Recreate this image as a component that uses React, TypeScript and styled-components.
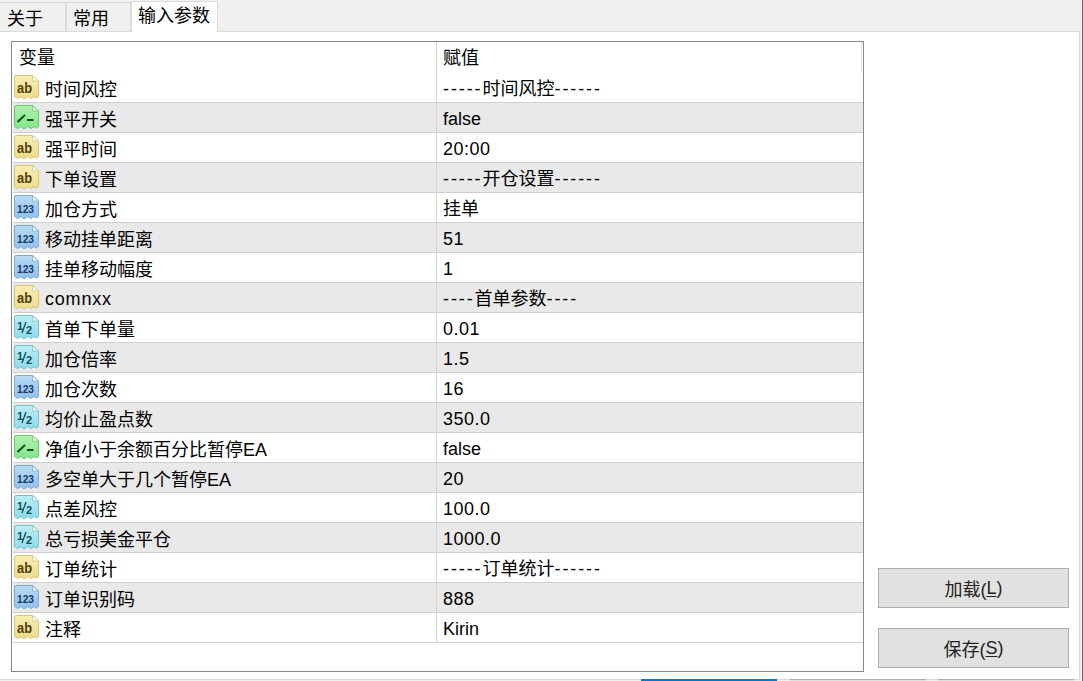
import React from 'react';
import styled, { createGlobalStyle } from 'styled-components';

const GlobalStyle = createGlobalStyle`
  html, body {
    margin: 0;
    padding: 0;
    background: #fff;
  }
  body {
    font-family: "Liberation Sans", "Noto Sans CJK SC", sans-serif;
    font-size: 18px;
    color: #000;
  }
`;

const Window = styled.div`
  width: 1083px;
  height: 681px;
  overflow: hidden;
  display: flex;
  flex-direction: column;
  background: #f0f0f0;
  border-right: 1px solid #666;
  box-sizing: border-box;
`;

const TabBar = styled.div`
  height: 31px;
  flex: none;
  display: flex;
  align-items: flex-end;
`;

const Tab = styled.div<{ $active?: boolean; $first?: boolean; $width: number }>`
  box-sizing: border-box;
  height: ${(p) => (p.$active ? 31 : 29)}px;
  width: ${(p) => p.$width}px;
  margin-bottom: ${(p) => (p.$active ? -1 : 0)}px;
  padding-left: ${(p) => (p.$first ? 7 : 6)}px;
  line-height: ${(p) => (p.$active ? 29 : 32)}px;
  background: ${(p) => (p.$active ? '#fff' : '#f0f0f0')};
  border-top: 1px solid #d9d9d9;
  border-right: 1px solid #d9d9d9;
  border-left: ${(p) => (p.$first ? 'none' : '1px solid #d9d9d9')};
  position: relative;
  z-index: ${(p) => (p.$active ? 1 : 0)};
`;

const Panel = styled.div`
  flex: none;
  height: 648px;
  margin-right: 2px;
  box-sizing: border-box;
  background: #fff;
  border-top: 1px solid #d9d9d9;
  border-right: 1px solid #d9d9d9;
  display: flex;
  padding: 9px 10px 0 11px;
`;

const Grid = styled.div`
  width: 853px;
  height: 631px;
  box-sizing: border-box;
  border: 1px solid #828790;
  flex: none;
  padding-left: 1px;
`;

const HeaderRow = styled.div`
  height: 31px;
  display: flex;
  margin-right: 1px;
  border-right: 1px solid #e3e3e3;
`;

const Row = styled.div<{ $odd?: boolean }>`
  height: 30px;
  box-sizing: border-box;
  display: flex;
  background: ${(p) => (p.$odd ? '#e9e9e9' : '#fff')};
  border-bottom: 1px solid #cfcfcf;
`;

const NameCell = styled.div`
  width: 423px;
  flex: none;
  box-sizing: border-box;
  display: flex;
  align-items: center;
  gap: 6px;
  padding-left: 1px;
  white-space: nowrap;
`;

// a name with no CJK glyph sits higher in its line box, hence the padding
const NameText = styled.span<{ $latin?: boolean }>`
  padding-top: ${(p) => (p.$latin ? 3 : 0)}px;
  letter-spacing: ${(p) => (p.$latin ? 0.8 : 0)}px;
`;

const HeaderName = styled.div`
  width: 423px;
  flex: none;
  box-sizing: border-box;
  padding-left: 6px;
  line-height: 33px;
`;

const ValueCell = styled.div<{ $numeric?: boolean }>`
  flex: 1;
  padding-left: 6px;
  border-left: 1px solid #d4d4d4;
  line-height: 32px;
  white-space: nowrap;
  letter-spacing: ${(p) => (p.$numeric ? 0.5 : 0)}px;
`;

const HeaderValue = styled(ValueCell)`
  line-height: 33px;
`;

const Dashes = styled.span`
  letter-spacing: 1.9px;
`;

const Side = styled.div`
  flex: 1;
  display: flex;
  flex-direction: column;
  align-items: flex-end;
  padding-top: 527px;
  gap: 20px;
`;

const Button = styled.div`
  box-sizing: border-box;
  width: 191px;
  height: 40px;
  background: #e1e1e1;
  border: 1px solid #adadad;
  display: flex;
  align-items: center;
  justify-content: center;
  color: #222;

  u {
    text-underline-offset: 2px;
  }
`;

const BottomStrip = styled.div`
  flex: 1;
  display: flex;
  background: #f0f0f0;
  border-top: 1px solid #d9d9d9;
  margin-right: 2px;
`;

const StatusTab = styled.div<{ $blue?: boolean; $left: number }>`
  width: 136px;
  margin-left: ${(p) => p.$left}px;
  background: ${(p) => (p.$blue ? '#0078d7' : '#e1e1e1')};
  border-top: 1px solid ${(p) => (p.$blue ? '#0078d7' : '#adadad')};
  margin-top: -1px;
`;

const IconText = styled.text`
  font-family: "Liberation Sans", sans-serif;
  font-weight: 700;
`;

type Kind = 'ab' | 'bool' | 'int' | 'float';

const palette: Record<Kind, { top: string; fill: string; edge: string; ink: string }> = {
  ab: { top: '#f8edb4', fill: '#efdc8a', edge: '#d6c47c', ink: '#4f4010' },
  bool: { top: '#b0f2b0', fill: '#84e48a', edge: '#68c870', ink: '#0c5019' },
  int: { top: '#bcdaf5', fill: '#8fc0ec', edge: '#7eaad6', ink: '#123a6b' },
  float: { top: '#bcedf4', fill: '#8edbe8', edge: '#74c2d0', ink: '#0f4f60' },
};

const TypeIcon: React.FC<{ kind: Kind }> = ({ kind }) => {
  const c = palette[kind];
  const id = `icon-fill-${kind}`;
  return (
    <svg width="25" height="25" viewBox="0 0 25 25" style={{ flex: 'none' }}>
      <defs>
        <linearGradient id={id} x1="0" y1="0" x2="0" y2="1">
          <stop offset="0" stopColor={c.top} />
          <stop offset="1" stopColor={c.fill} />
        </linearGradient>
      </defs>
      <path
        d="M0.5 2 Q0.5 0.5 2 0.5 H18.5 L24.5 6 V21.5 L22.5 23 L20 21.5 L17 23.5 L13.5 21.5 L10 24 L7 21.5 L3.5 23.5 L0.5 21.5 Z"
        fill={`url(#${id})`}
        stroke={c.edge}
      />
      <path d="M18.5 0.5 V6 H24.5 Z" fill="#fff" stroke={c.edge} strokeWidth="0.8" />
      {kind === 'ab' && (
        <IconText x="3" y="17.5" fontSize="14" textLength="15" lengthAdjust="spacingAndGlyphs" fill={c.ink}>ab</IconText>
      )}
      {kind === 'bool' && (
        <g fill="none" stroke={c.ink} strokeWidth="2">
          <path d="M3.5 17 L11 10" />
          <path d="M13 15 H19.5" />
        </g>
      )}
      {kind === 'int' && (
        <IconText x="3" y="18" fontSize="11" textLength="17" lengthAdjust="spacingAndGlyphs" fill={c.ink}>123</IconText>
      )}
      {kind === 'float' && (
        <g>
          <IconText x="3" y="15" fontSize="11" fill={c.ink}>1</IconText>
          <path d="M8 18 L12 7" fill="none" stroke={c.ink} strokeWidth="1.3" />
          <IconText x="12" y="18.5" fontSize="11" fill={c.ink}>2</IconText>
        </g>
      )}
    </svg>
  );
};

const rows: { name: string; value: string; kind: Kind }[] = [
  { name: '时间风控', value: '-----时间风控------', kind: 'ab' },
  { name: '强平开关', value: 'false', kind: 'bool' },
  { name: '强平时间', value: '20:00', kind: 'ab' },
  { name: '下单设置', value: '-----开仓设置------', kind: 'ab' },
  { name: '加仓方式', value: '挂单', kind: 'int' },
  { name: '移动挂单距离', value: '51', kind: 'int' },
  { name: '挂单移动幅度', value: '1', kind: 'int' },
  { name: 'comnxx', value: '----首单参数----', kind: 'ab' },
  { name: '首单下单量', value: '0.01', kind: 'float' },
  { name: '加仓倍率', value: '1.5', kind: 'float' },
  { name: '加仓次数', value: '16', kind: 'int' },
  { name: '均价止盈点数', value: '350.0', kind: 'float' },
  { name: '净值小于余额百分比暂停EA', value: 'false', kind: 'bool' },
  { name: '多空单大于几个暂停EA', value: '20', kind: 'int' },
  { name: '点差风控', value: '100.0', kind: 'float' },
  { name: '总亏损美金平仓', value: '1000.0', kind: 'float' },
  { name: '订单统计', value: '-----订单统计------', kind: 'ab' },
  { name: '订单识别码', value: '888', kind: 'int' },
  { name: '注释', value: 'Kirin', kind: 'ab' },
];

// hyphen runs are wider in the original UI font
const renderValue = (value: string) =>
  value.split(/(-+)/).map((part, i) =>
    part.startsWith('-') ? <Dashes key={i}>{part}</Dashes> : part,
  );

export default function App() {
  return (
    <Window>
      <GlobalStyle />
      <TabBar>
        <Tab $width={66} $first>关于</Tab>
        <Tab $width={65}>常用</Tab>
        <Tab $width={87} $active>输入参数</Tab>
      </TabBar>
      <Panel>
        <Grid>
          <HeaderRow>
            <HeaderName>变量</HeaderName>
            <HeaderValue>赋值</HeaderValue>
          </HeaderRow>
          {rows.map((r, i) => (
            <Row key={r.name} $odd={i % 2 === 1}>
              <NameCell>
                <TypeIcon kind={r.kind} />
                <NameText $latin={/^[a-z]+$/.test(r.name)}>{r.name}</NameText>
              </NameCell>
              <ValueCell $numeric={/^[\d.:]+$/.test(r.value)}>{renderValue(r.value)}</ValueCell>
            </Row>
          ))}
        </Grid>
        <Side>
          <Button>加载(<u>L</u>)</Button>
          <Button>保存(<u>S</u>)</Button>
        </Side>
      </Panel>
      <BottomStrip>
        <StatusTab $blue $left={641} />
        <StatusTab $left={13} />
        <StatusTab $left={12} />
      </BottomStrip>
    </Window>
  );
}
